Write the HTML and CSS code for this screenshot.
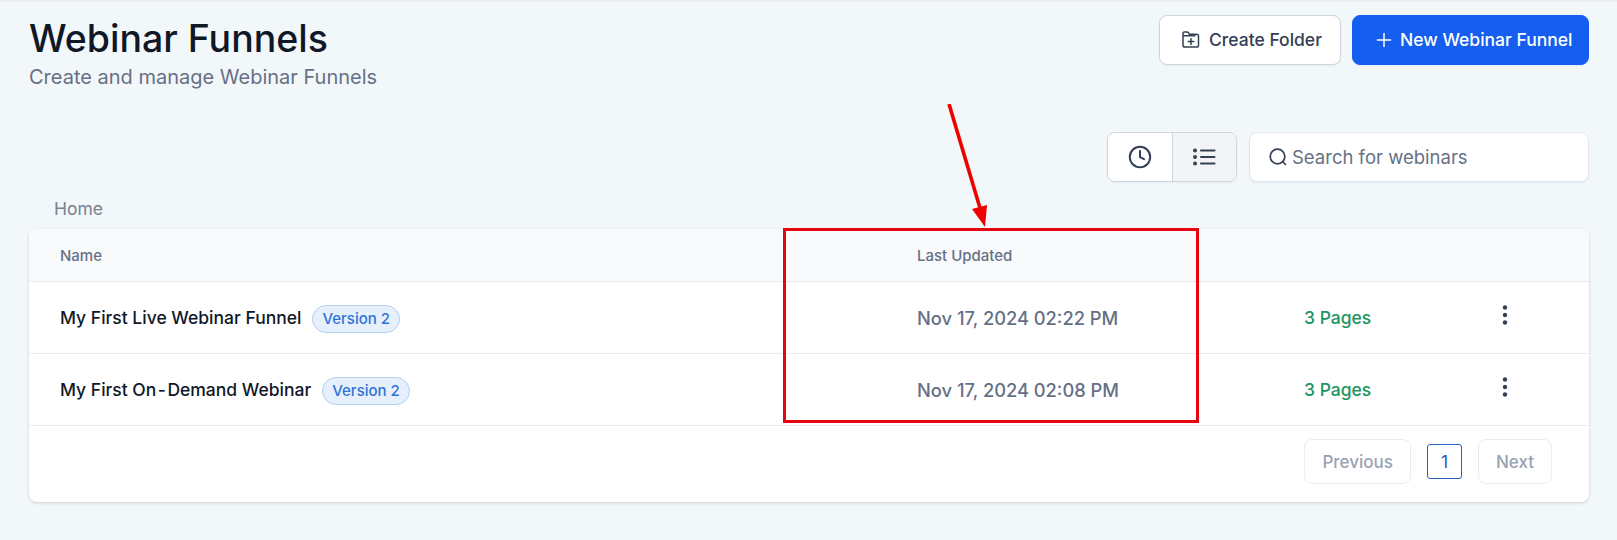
FILE: index.html
```html
<!DOCTYPE html>
<html lang="en">
<head>
<meta charset="utf-8">
<title>Webinar Funnels</title>
<link rel="stylesheet" href="styles.css">
</head>
<body>
<main class="page">
  <header class="head">
    <div class="titles">
      <h1 class="title">Webinar Funnels</h1>
      <p class="subtitle">Create and manage Webinar Funnels</p>
    </div>
    <div class="actions">
      <button class="btn btn-white">
        <svg class="ico" width="20" height="20" viewBox="0 0 20 20" fill="none" stroke="#344054" stroke-width="1.5" stroke-linecap="round" stroke-linejoin="round"><path d="M2 5V3.300c0-.7.6-1.300 1.300-1.300h2.900c.4 0 .8.2 1 .5l1.200 1.700h7.300c1 0 1.800.8 1.800 1.800v9.200c0 1-.8 1.800-1.800 1.800H3.800c-1 0-1.800-.8-1.800-1.800V5.800h12"/><path d="M10 8.800v5.600M7.200 11.600h5.600"/></svg>
        Create Folder
      </button>
      <button class="btn btn-blue">
        <svg class="ico" width="20" height="20" viewBox="0 0 20 20" fill="none" stroke="#fff" stroke-width="1.5" stroke-linecap="round"><path d="M10 3.400v13.200M3.400 10h13.200"/></svg>
        New Webinar Funnel
      </button>
    </div>
  </header>

  <div class="tools">
    <div class="toggle">
      <button class="tog">
        <svg width="24" height="24" viewBox="0 0 24 24" fill="none" stroke="#344054" stroke-width="2" stroke-linecap="round" stroke-linejoin="round"><circle cx="12" cy="12" r="10.200"/><path d="M12 6v6.200l4 2"/></svg>
      </button>
      <button class="tog tog-on">
        <svg width="24" height="24" viewBox="0 0 24 24" fill="none" stroke="#344054" stroke-width="2" stroke-linecap="round"><path d="M9 5.500h13.500M9 12h13.500M9 18.500h13.500"/><path d="M3 5.500h.01M3 12h.01M3 18.500h.01" stroke-width="4"/></svg>
      </button>
    </div>
    <label class="search">
      <svg width="20" height="20" viewBox="0 0 20 20" fill="none" stroke="#344054" stroke-width="1.700" stroke-linecap="round"><circle cx="9.500" cy="9.500" r="7.300"/><path d="M15 15l2.500 2.500"/></svg>
      <span class="search-text">Search for webinars</span>
    </label>
  </div>

  <div class="crumb">Home</div>

  <section class="card">
    <div class="row row-head">
      <div class="c-name">Name</div>
      <div class="c-date">Last Updated</div>
      <div class="c-pages"></div>
      <div class="c-menu"></div>
    </div>
    <div class="row row-body">
      <div class="c-name"><span class="name">My First Live Webinar Funnel</span><span class="tag">Version 2</span></div>
      <div class="c-date date">Nov 17, 2024 02:22 PM</div>
      <div class="c-pages pages">3 Pages</div>
      <div class="c-menu"><svg class="dots" width="6" height="20" viewBox="0 0 6 20" fill="#344054"><circle cx="3" cy="2.500" r="2.200"/><circle cx="3" cy="10" r="2.200"/><circle cx="3" cy="17.500" r="2.200"/></svg></div>
    </div>
    <div class="row row-body">
      <div class="c-name"><span class="name">My First On<span class="hy">-</span>Demand Webinar</span><span class="tag">Version 2</span></div>
      <div class="c-date date">Nov 17, 2024 02:08 PM</div>
      <div class="c-pages pages">3 Pages</div>
      <div class="c-menu"><svg class="dots" width="6" height="20" viewBox="0 0 6 20" fill="#344054"><circle cx="3" cy="2.500" r="2.200"/><circle cx="3" cy="10" r="2.200"/><circle cx="3" cy="17.500" r="2.200"/></svg></div>
    </div>
    <footer class="pager">
      <span class="pg">Previous</span>
      <span class="pg-num">1</span>
      <span class="pg">Next</span>
    </footer>
  </section>
</main>

<div class="note-box"></div>
<svg class="note-arrow" width="60" height="130" viewBox="0 0 60 130"><path d="M10 0L41 104" stroke="#ee0000" stroke-width="3.600" fill="none"/><path d="M33 105L48 101L46 123Z" fill="#ee0000"/></svg>
</body>
</html>
```
FILE: styles.css
```css
* { box-sizing: border-box; }
html, body { margin: 0; height: 100%; }
body {
  background: #f2f7fa;
  font-family: Inter, "Liberation Sans", sans-serif;
  color: #101828;
  overflow: hidden;
  position: relative;
}
.page {
  border-top: 2px solid #e9ecf0;
  padding: 13px 28px 0 29px;
}
.head { display: flex; justify-content: space-between; align-items: flex-start; height: 117px; }
.title { margin: 2px 0 0; font-size: 37.500px; line-height: 44px; font-weight: 500; color: #101828; }
.subtitle { margin: 3px 0 0; font-size: 20px; line-height: 26px; color: #667085; }
.actions { display: flex; gap: 11px; }
.btn {
  display: flex; align-items: center; height: 50px;
  border-radius: 8px; font: 500 17.500px/24px Inter, "Liberation Sans", sans-serif;
}
.ico { flex: none; }
.btn-white {
  width: 182px; padding: 0 0 0 21px; gap: 8px;
  background: #fff; border: 1px solid #d0d5dd; color: #344054;
  box-shadow: 0 1px 2px rgba(16,24,40,.05);
}
.btn-blue {
  width: 237px; padding: 0 0 0 21px; gap: 6px;
  background: #155eef; border: 1px solid #155eef; color: #fff;
  box-shadow: 0 1px 2px rgba(16,24,40,.05);
}
.tools { display: flex; justify-content: flex-end; gap: 12px; }
.toggle {
  display: flex; height: 50px; width: 130px; overflow: hidden;
  border: 1px solid #d0d5dd; border-radius: 8px;
  box-shadow: 0 1px 2px rgba(16,24,40,.05);
}
.tog { flex: 1; display: flex; align-items: center; justify-content: center; background: #fff; border: 0; padding: 0; }
.tog-on { background: #f2f4f7; border-left: 1px solid #d0d5dd; }
.search {
  width: 340px; height: 50px; display: flex; align-items: center; gap: 4px; padding-left: 18px;
  background: #fff; border: 1px solid #e4e7ec; border-radius: 8px;
  box-shadow: 0 1px 2px rgba(16,24,40,.05);
}
.search-text { font-size: 18.500px; color: #667085; }
.crumb { margin: 13px 0 0 25px; height: 34px; font-size: 17.500px; line-height: 22px; padding-top: 3px; color: #7a828e; }
.card {
  width: 1560px; height: 273px; background: #fff; border-radius: 8px; overflow: hidden;
  box-shadow: 0 1px 3px rgba(16,24,40,.18);
}
.row { display: flex; align-items: center; padding-left: 31px; border-bottom: 1px solid #e8ebef; }
.row-head { height: 53px; background: #f9fafb; font-size: 15px; font-weight: 500; color: #667085; }
.row-body { height: 72px; font-size: 17.500px; }
.c-name { width: 857px; display: flex; align-items: center; }
.c-date { width: 387px; }
.c-pages { width: 198px; }
.c-menu { display: flex; }
.name { font-weight: 500; color: #101828; }
.hy { margin: 0 1.500px; }
.tag {
  margin: 2px 0 0 11px; height: 28px; padding: 0 9px; display: inline-flex; align-items: center;
  font-size: 15px; font-weight: 500; color: #2e74d6;
  background: #e6f0fd; border: 1px solid #b2d0f2; border-radius: 14px;
}
.date { color: #667085; font-weight: 500; font-size: 18.300px; }
.pages { color: #1c9460; font-weight: 500; }
.dots { margin-top: -6px; }
.pager { display: flex; justify-content: flex-end; align-items: flex-start; gap: 16px; height: 76px; padding: 13px 37px 0 0; }
.pg {
  height: 45px; padding: 0 17px; display: flex; align-items: center;
  font-size: 17px; font-weight: 500; color: #98a2b3;
  border: 1px solid #eaecf0; border-radius: 8px;
}
.pg-num {
  margin-top: 5px; width: 35px; height: 35px; display: flex; align-items: center; justify-content: center;
  font-size: 17.500px; color: #2a5fc4; border: 1px solid #2a5fc4; border-radius: 3px;
}
.note-box { position: absolute; left: 783px; top: 228px; width: 416px; height: 195px; border: 3px solid #e60612; }
.note-arrow { position: absolute; left: 939px; top: 104px; }
```
